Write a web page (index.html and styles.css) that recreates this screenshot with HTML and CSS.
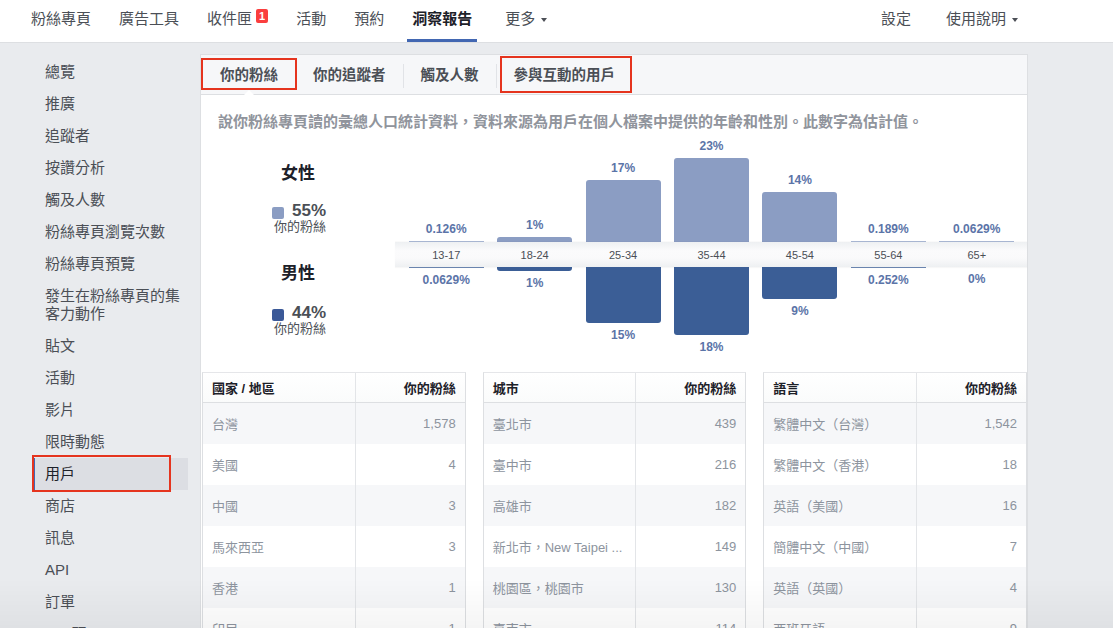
FILE: index.html
```html
<!DOCTYPE html>
<html lang="zh-Hant">
<head>
<meta charset="utf-8">
<title>洞察報告</title>
<link rel="stylesheet" href="styles.css">
</head>
<body>
<header class="topnav">
  <nav class="nav-group">
    <a class="nav-item">粉絲專頁</a>
    <a class="nav-item">廣告工具</a>
    <a class="nav-item">收件匣<span class="badge">1</span></a>
    <a class="nav-item">活動</a>
    <a class="nav-item">預約</a>
    <a class="nav-item active">洞察報告</a>
    <a class="nav-item">更多<span class="caret"></span></a>
  </nav>
  <nav class="nav-group right">
    <a class="nav-item">設定</a>
    <a class="nav-item">使用說明<span class="caret"></span></a>
  </nav>
</header>

<div class="page">
  <aside class="sidebar">
    <ul class="side-list">
      <li>總覽</li>
      <li>推廣</li>
      <li>追蹤者</li>
      <li>按讚分析</li>
      <li>觸及人數</li>
      <li>粉絲專頁瀏覽次數</li>
      <li>粉絲專頁預覽</li>
      <li>發生在粉絲專頁的集客力動作</li>
      <li>貼文</li>
      <li>活動</li>
      <li>影片</li>
      <li>限時動態</li>
      <li class="selected">用戶<span class="annot side-annot"></span></li>
      <li>商店</li>
      <li>訊息</li>
      <li>API</li>
      <li>訂單</li>
      <li>QR 碼</li>
    </ul>
  </aside>

  <main class="card">
    <div class="tabs">
      <div class="tab active">你的粉絲<span class="annot tab1-annot"></span></div>
      <div class="tab">你的追蹤者</div>
      <div class="tab sep">觸及人數</div>
      <div class="tab sep">參與互動的用戶<span class="annot tab4-annot"></span></div>
    </div>

    <p class="desc">說你粉絲專頁讀的彙總人口統計資料，資料來源為用戶在個人檔案中提供的年齡和性別。此數字為估計值。</p>

    <section class="chart">
      <div class="legend">
        <div class="legend-group">
          <div class="gender">女性</div>
          <div class="stat">
            <div class="stat-row"><span class="swatch female"></span><span class="pct">55%</span></div>
            <div class="stat-sub">你的粉絲</div>
          </div>
        </div>
        <div class="legend-group">
          <div class="gender">男性</div>
          <div class="stat">
            <div class="stat-row"><span class="swatch male"></span><span class="pct">44%</span></div>
            <div class="stat-sub">你的粉絲</div>
          </div>
        </div>
      </div>

      <div class="plot">
        <div class="bars-row top">
          <div class="col"><span class="val">0.126%</span><span class="bar female thin" style="height:1px"></span></div>
          <div class="col"><span class="val">1%</span><span class="bar female" style="height:5px"></span></div>
          <div class="col"><span class="val">17%</span><span class="bar female" style="height:62px"></span></div>
          <div class="col"><span class="val">23%</span><span class="bar female" style="height:84px"></span></div>
          <div class="col"><span class="val">14%</span><span class="bar female" style="height:50px"></span></div>
          <div class="col"><span class="val">0.189%</span><span class="bar female thin" style="height:1px"></span></div>
          <div class="col"><span class="val">0.0629%</span><span class="bar female thin" style="height:1px"></span></div>
        </div>
        <div class="band">
          <span class="age">13-17</span>
          <span class="age">18-24</span>
          <span class="age">25-34</span>
          <span class="age">35-44</span>
          <span class="age">45-54</span>
          <span class="age">55-64</span>
          <span class="age">65+</span>
        </div>
        <div class="bars-row bottom">
          <div class="col"><span class="bar male thin" style="height:1px"></span><span class="val">0.0629%</span></div>
          <div class="col"><span class="bar male" style="height:4px"></span><span class="val">1%</span></div>
          <div class="col"><span class="bar male" style="height:56px"></span><span class="val">15%</span></div>
          <div class="col"><span class="bar male" style="height:68px"></span><span class="val">18%</span></div>
          <div class="col"><span class="bar male" style="height:32px"></span><span class="val">9%</span></div>
          <div class="col"><span class="bar male thin" style="height:1px"></span><span class="val">0.252%</span></div>
          <div class="col"><span class="bar male" style="height:0px"></span><span class="val">0%</span></div>
        </div>
      </div>
    </section>

    <section class="tables">
      <div class="dtable">
        <div class="thead"><span class="c-name">國家 / 地區</span><span class="c-val">你的粉絲</span></div>
        <div class="trow"><span class="c-name">台灣</span><span class="c-val">1,578</span></div>
        <div class="trow"><span class="c-name">美國</span><span class="c-val">4</span></div>
        <div class="trow"><span class="c-name">中國</span><span class="c-val">3</span></div>
        <div class="trow"><span class="c-name">馬來西亞</span><span class="c-val">3</span></div>
        <div class="trow"><span class="c-name">香港</span><span class="c-val">1</span></div>
        <div class="trow"><span class="c-name">印尼</span><span class="c-val">1</span></div>
      </div>
      <div class="dtable">
        <div class="thead"><span class="c-name">城市</span><span class="c-val">你的粉絲</span></div>
        <div class="trow"><span class="c-name">臺北市</span><span class="c-val">439</span></div>
        <div class="trow"><span class="c-name">臺中市</span><span class="c-val">216</span></div>
        <div class="trow"><span class="c-name">高雄市</span><span class="c-val">182</span></div>
        <div class="trow"><span class="c-name">新北市，New Taipei ...</span><span class="c-val">149</span></div>
        <div class="trow"><span class="c-name">桃園區，桃園市</span><span class="c-val">130</span></div>
        <div class="trow"><span class="c-name">臺南市</span><span class="c-val">114</span></div>
      </div>
      <div class="dtable">
        <div class="thead"><span class="c-name">語言</span><span class="c-val">你的粉絲</span></div>
        <div class="trow"><span class="c-name">繁體中文（台灣）</span><span class="c-val">1,542</span></div>
        <div class="trow"><span class="c-name">繁體中文（香港）</span><span class="c-val">18</span></div>
        <div class="trow"><span class="c-name">英語（美國）</span><span class="c-val">16</span></div>
        <div class="trow"><span class="c-name">簡體中文（中國）</span><span class="c-val">7</span></div>
        <div class="trow"><span class="c-name">英語（英國）</span><span class="c-val">4</span></div>
        <div class="trow"><span class="c-name">西班牙語</span><span class="c-val">9</span></div>
      </div>
    </section>
  </main>
</div>
<div class="vignette"></div>
</body>
</html>
```

FILE: styles.css
```css
html, body {
  margin: 0;
  height: 100%;
  overflow: hidden;
}
body {
  background: #e9ebee;
  font-family: "Liberation Sans", "Noto Sans CJK TC", sans-serif;
  color: #1d2129;
}

/* top navigation */
.topnav {
  height: 42px;
  background: #fff;
  border-bottom: 1px solid #dddfe2;
  display: flex;
  justify-content: space-between;
  padding: 0 95px 0 31px;
}
.nav-group {
  display: flex;
  gap: 28px;
}
.nav-group.right { gap: 35px; }
.nav-item {
  position: relative;
  display: flex;
  align-items: center;
  font-size: 15px;
  line-height: 20px;
  color: #4b4f56;
  padding-bottom: 4px;
}
.nav-item.active {
  font-weight: bold;
  color: #1d2129;
  margin-right: 5px;
}
.nav-item.active::after {
  content: "";
  position: absolute;
  left: -5px;
  right: -5px;
  bottom: 0;
  height: 3px;
  background: #4267b2;
}
.badge {
  background: #fa3e3e;
  color: #fff;
  font-size: 11px;
  font-weight: bold;
  line-height: 14px;
  height: 14px;
  padding: 0 3px;
  border-radius: 2px;
  margin-left: 4px;
  margin-top: -6px;
}
.caret {
  width: 0;
  height: 0;
  border-left: 3px solid transparent;
  border-right: 3px solid transparent;
  border-top: 4px solid #4b4f56;
  margin-left: 6px;
  margin-top: 2px;
}

/* page */
.page {
  display: flex;
  align-items: flex-start;
  padding-left: 33px;
  gap: 12px;
}

/* sidebar */
.sidebar {
  width: 155px;
  padding-top: 13px;
}
.side-list {
  list-style: none;
  margin: 0;
  padding: 0;
}
.side-list li {
  position: relative;
  font-size: 15px;
  line-height: 18px;
  padding: 7px 2px 7px 12px;
  color: #4b4f56;
}
.side-list li.selected {
  background: #dcdee3;
  border-left: 2px solid #4267b2;
  padding-left: 10px;
  color: #1d2129;
}

.annot {
  position: absolute;
  border: 2.5px solid #e5341e;
  pointer-events: none;
}
.side-annot {
  left: -3px;
  top: -3px;
  right: 17px;
  bottom: -2px;
}

/* card */
.card {
  margin-top: 11px;
  width: 826px;
  height: 700px;
  background: #fff;
  border: 1px solid #dddfe2;
}

.tabs {
  height: 40px;
  box-sizing: border-box;
  background: #f6f7f9;
  border-bottom: 1px solid #dddfe2;
  display: flex;
  padding-left: 1.5px;
}
.tab {
  position: relative;
  display: flex;
  align-items: center;
  padding: 0 17.5px 2px;
  font-size: 14.5px;
  font-weight: bold;
  color: #4b4f56;
}
.tab.sep::before {
  content: "";
  position: absolute;
  left: 0;
  top: 9px;
  height: 24px;
  width: 1px;
  background: #e1e3e7;
}
.tab.active::after {
  content: "";
  position: absolute;
  left: 50%;
  bottom: -1px;
  margin-left: -5px;
  border-left: 5px solid transparent;
  border-right: 5px solid transparent;
  border-bottom: 5px solid #fff;
}
.tab1-annot {
  left: -2px;
  right: -1px;
  top: 3px;
  bottom: 4px;
}
.tab4-annot {
  left: 4px;
  right: 1px;
  top: 1px;
  bottom: 1px;
}

.desc {
  margin: 17px 0 0 17px;
  font-size: 15px;
  line-height: 20px;
  letter-spacing: 0;
  font-weight: bold;
  color: #90949c;
}

/* chart */
.chart {
  display: flex;
  height: 240px;
}
.legend {
  width: 194px;
  display: flex;
  flex-direction: column;
  align-items: center;
  padding-top: 31px;
}
.legend-group {
  display: flex;
  flex-direction: column;
  align-items: center;
}
.legend-group + .legend-group { margin-top: 29px; }
.gender {
  font-size: 17px;
  line-height: 22px;
  font-weight: bold;
  color: #1d2129;
}
.stat {
  margin-top: 17px;
  display: flex;
  flex-direction: column;
  align-items: flex-end;
  padding-left: 2px;
}
.legend-group + .legend-group .stat { margin-top: 19px; }
.stat-row {
  display: flex;
  align-items: center;
  height: 18px;
}
.swatch {
  width: 12px;
  height: 12px;
  border-radius: 2px;
  margin-right: 8px;
  margin-top: 3px;
}
.swatch.female { background: #8b9dc3; }
.swatch.male { background: #3b5998; }
.pct {
  font-size: 17px;
  font-weight: bold;
  line-height: 18px;
  color: #4b4f56;
}
.stat-sub {
  font-size: 13px;
  line-height: 14px;
  color: #4b4f56;
}

.plot {
  flex: 1;
  display: flex;
  flex-direction: column;
}
.bars-row {
  display: grid;
  grid-template-columns: repeat(7, 1fr);
  padding: 0 6px 0 7px;
}
.bars-row.top { height: 110px; }
.col {
  display: flex;
  flex-direction: column;
  align-items: center;
}
.bars-row.top .col { justify-content: flex-end; }
.val {
  font-size: 12px;
  line-height: 14px;
  font-weight: bold;
  color: #5b74a8;
}
.bars-row.top .val { margin-bottom: 5px; }
.bars-row.bottom .val { margin-top: 5px; }
.bar {
  width: 75px;
  display: block;
}
.bar.female {
  background: #8b9dc3;
  border-radius: 3px 3px 0 0;
}
.bar.male {
  background: #3b5e96;
  border-radius: 0 0 3px 3px;
}
.bar.thin { border-radius: 0; opacity: 0.75; }

.band {
  height: 25px;
  display: grid;
  grid-template-columns: repeat(7, 1fr);
  padding: 0 6px 0 7px;
  align-items: center;
  background: linear-gradient(to bottom, #eef0f2 0%, #fbfbfc 35%, #fafafb 65%, #eef0f2 100%);
  box-shadow: 0 1px 1px rgba(0,0,0,0.03), 0 -1px 1px rgba(0,0,0,0.02);
}
.age {
  text-align: center;
  font-size: 11px;
  color: #4b4f56;
}

/* tables */
.tables {
  display: grid;
  grid-template-columns: repeat(3, 1fr);
  gap: 17px;
  padding-left: 1px;
}
.dtable {
  border-left: 1px solid #dddfe2;
  border-right: 1px solid #dddfe2;
  border-top: 1px solid #e5e6e9;
}
.thead, .trow {
  display: grid;
  grid-template-columns: 1fr 110px;
  font-size: 13px;
}
.thead {
  height: 29px;
  align-items: center;
  background: linear-gradient(#fff, #fafbfb);
  border-bottom: 1px solid #dddfe2;
  font-weight: bold;
  color: #1d2129;
}
.trow {
  height: 41px;
  align-items: stretch;
  color: #8d949e;
}
.trow:nth-child(even) { background: #f6f7f9; }
.c-name {
  padding-left: 9px;
  display: flex;
  align-items: center;
  white-space: nowrap;
  overflow: hidden;
}
.c-val {
  padding-right: 9px;
  display: flex;
  align-items: center;
  justify-content: flex-end;
  border-left: 1px solid #e3e5e8;
  align-self: stretch;
}
.thead .c-val { height: 100%; }

.vignette {
  position: fixed;
  left: 0;
  right: 0;
  bottom: 0;
  height: 50px;
  background: linear-gradient(to bottom, rgba(0,0,0,0), rgba(0,0,0,0.04));
  pointer-events: none;
}
```
